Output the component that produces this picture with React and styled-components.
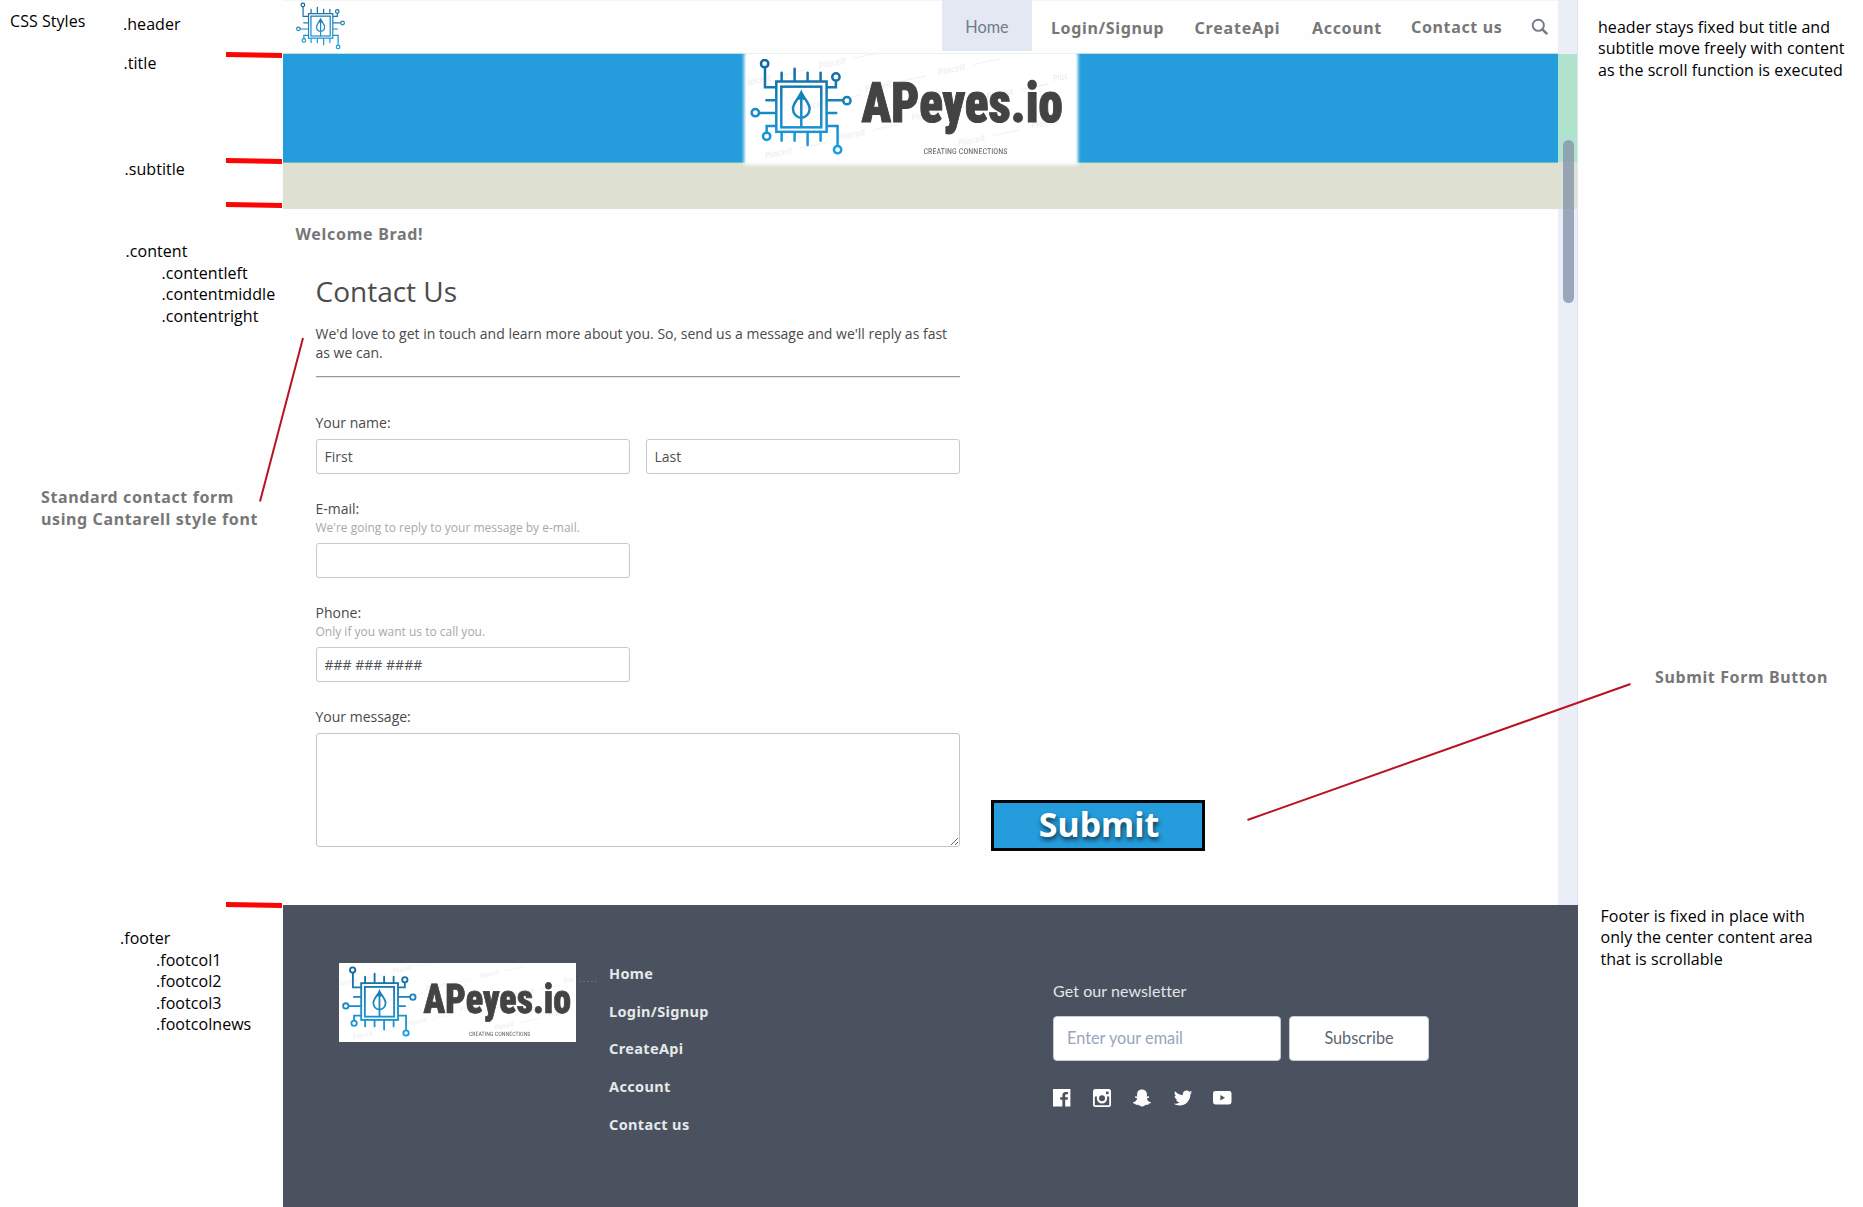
import React from "react";
import styled, { createGlobalStyle } from "styled-components";
import { IoLogoTwitter } from "react-icons/io";
import { FaSnapchatGhost } from "react-icons/fa";

const body = '"Open Sans", "Noto Sans", sans-serif';
const display = '"Noto Sans", "Open Sans", sans-serif';
const lato = 'Lato, "Open Sans", sans-serif';

const GlobalStyle = createGlobalStyle`
  * { box-sizing: border-box; }
  body { margin: 0; background: #fefefe; font-family: ${body}; }
`;

const Board = styled.div`
  position: relative;
  display: grid;
  grid-template-columns: 283px 1295px 285px;
  width: 1863px;
  height: 1207px;
  overflow: hidden;
`;

/* ---------- annotation gutters ---------- */
const Gutter = styled.aside`
  display: flex;
  flex-direction: column;
  color: #000;
  font-size: 16px;
  line-height: 21.6px;
  letter-spacing: 0.05px;
  white-space: nowrap;
`;
const GutterTop = styled.div`
  display: flex;
  height: 486px;
`;
const GutterHeading = styled.div`
  width: 123px;
  padding: 10.5px 0 0 10px;
  flex: none;
`;
const Notes = styled.div`
  display: flex;
  flex-direction: column;
  padding: ${(p) => p.$pad || "0"};
`;
const Note = styled.div`
  margin-top: ${(p) => p.$gap || 0}px;
  padding-left: ${(p) => p.$indent || 0}px;
`;
const Callout = styled.div`
  font: 700 16px/22px ${display};
  letter-spacing: 0.62px;
  color: #777;
  padding: ${(p) => p.$pad};
  height: ${(p) => p.$height}px;
`;
const Marks = styled.svg`
  position: absolute;
  inset: 0;
  pointer-events: none;
`;

/* ---------- page ---------- */
const Page = styled.main`
  display: flex;
  flex-direction: column;
  height: 1207px;
`;
const Scroller = styled.div`
  display: grid;
  grid-template-columns: 1275px 20px;
  height: 905px;
`;
const Main = styled.div`
  display: flex;
  flex-direction: column;
`;
const Header = styled.header`
  display: flex;
  height: 54px;
  border-top: 1px solid #f5f5f5;
  border-bottom: 1px solid #b9e4da;
  background: #fefefe;
`;
const HeaderLogo = styled.div`
  width: 659px;
  padding: 1px 0 0 12.5px;
`;
const NavTab = styled.a`
  width: 90px;
  height: 51px;
  margin-top: -1px;
  background: #e4e8f2;
  color: #727b89;
  font: 400 16.3px/54px ${lato};
  text-align: center;
`;
const NavLink = styled.a`
  width: ${(p) => p.$width}px;
  color: #777;
  font: 700 16px/22px ${display};
  letter-spacing: ${(p) => p.$track || 0.65}px;
  padding-top: ${(p) => p.$top || 16}px;
`;
const Nav = styled.nav`
  display: flex;
`;
const NavLinks = styled.div`
  display: flex;
  padding-left: 19px;
`;
const SearchIcon = styled.svg`
  margin-top: 17px;
`;
const Title = styled.section`
  position: relative;
  z-index: 1;
  height: 109px;
  background: #259ddd;
  border-bottom: 1px solid #62bfc6;
`;
const Banner = styled.div`
  width: 330px;
  height: 108px;
  margin-left: 463px;
  background: #fff;
  box-shadow: 0 1px 3px 2px #fdfefc;
`;
const Subtitle = styled.section`
  height: 46px;
  background: #dee1d1;
`;
const Welcome = styled.div`
  height: 63px;
  padding: 14px 0 0 12.5px;
  color: #777;
  font: 700 16px/22px ${display};
  letter-spacing: 0.7px;
`;
const Content = styled.section`
  display: flex;
  align-items: flex-end;
  padding-left: 33px;
  height: 575px;
`;
const Form = styled.form`
  width: 644px;
  color: #4a4a4a;
  font-size: 14px;
  line-height: 19px;
  display: flex;
  flex-direction: column;
`;
const FormTitle = styled.h1`
  margin: 0 0 0 -0.5px;
  font-size: 28px;
  line-height: 40px;
  font-weight: 400;
  color: #4c4c4c;
`;
const Intro = styled.p`
  margin: 13px 0 0 -0.5px;
`;
const Rule = styled.hr`
  width: 100%;
  height: 2px;
  margin: 14px 0 35px;
  border: 0;
  border-top: 1px solid #999;
  border-bottom: 1px solid #e4e4e4;
`;
const Field = styled.label`
  display: flex;
  flex-direction: column;
  margin-bottom: ${(p) => p.$after || 0}px;
`;
const FieldName = styled.span`
  margin-left: -0.5px;
`;
const Hint = styled.span`
  height: 18px;
  margin-left: -0.5px;
  font-size: 12px;
  line-height: 20px;
  color: #a9a9a9;
`;
const Inputs = styled.div`
  display: flex;
  gap: 16px;
  margin-top: 7px;
`;
const Input = styled.input`
  width: 314px;
  height: 35px;
  padding: 0 7.5px;
  border: 1px solid #c9c9c9;
  border-radius: 3px;
  background: #fff;
  font: 14px ${body};
  color: #555;
  outline: none;
  &::placeholder { color: #4f4f4f; opacity: 1; }
`;
const TextArea = styled.textarea`
  width: 644px;
  height: 114px;
  margin: 7px 0 0;
  border: 1px solid #c4c4c4;
  border-radius: 3px;
  background: #fff;
  display: block;
`;
const Submit = styled.button`
  width: 214px;
  height: 51px;
  margin: 0 0 -4px 31px;
  padding: 0 0 3px 2px;
  border: 3px solid #050505;
  background: #259ddd;
  color: #fff;
  font: 700 34px/40px ${display};
  text-shadow: 1px 3px 5px rgba(0, 0, 0, 0.65);
`;
const Track = styled.div`
  display: flex;
  flex-direction: column;
  position: relative;
  background: #ebeef7;
  border-right: 1px solid #e0e4f0;
`;
const TrackZone = styled.div`
  height: ${(p) => p.$height}px;
  background: ${(p) => p.$color};
`;
const Thumb = styled.div`
  position: absolute;
  left: 5px;
  top: 140px;
  width: 11px;
  height: 163px;
  border-radius: 6px;
  background: rgba(134, 149, 170, 0.8);
`;

/* ---------- footer ---------- */
const Footer = styled.footer`
  display: flex;
  height: 302px;
  background: #49525e;
`;
const FootLogo = styled.div`
  width: 237px;
  height: 79px;
  margin: 58px 0 0 56px;
  background: #fff;
`;
const Dashes = styled.div`
  width: 20px;
  height: 1px;
  margin: 76px 10px 0 3px;
  background: repeating-linear-gradient(90deg, #656d77 0 2px, transparent 2px 4px);
`;
const FootLinks = styled.div`
  display: flex;
  flex-direction: column;
  width: 444px;
  padding-top: 50px;
`;
const FootLink = styled.a`
  color: #e6e8ea;
  font: 700 14.5px/37.7px ${display};
  letter-spacing: 0.35px;
`;
const Newsletter = styled.div`
  padding-top: 76px;
  font: 16px/20px ${lato};
  letter-spacing: 0.08px;
  color: #e3e5e8;
`;
const NewsRow = styled.div`
  display: flex;
  gap: 8px;
  margin-top: 15px;
`;
const NewsInput = styled.input`
  width: 228px;
  height: 45px;
  padding: 0 13px 2px;
  border: 1px solid #c9cdd3;
  border-radius: 4px;
  font: 16.3px ${lato};
  background: #fff;
  outline: none;
  &::placeholder { color: #98a5bc; opacity: 1; }
`;
const NewsButton = styled.button`
  width: 140px;
  height: 45px;
  padding: 0 0 2px;
  border: 1px solid #c9cdd3;
  border-radius: 4px;
  font: 16.3px ${lato};
  background: #fff;
  color: #5c6673;
`;
const Socials = styled.div`
  display: flex;
  align-items: center;
  gap: 22px;
  height: 20px;
  margin-top: 27px;
  color: #fff;
  & > :last-child { margin-left: -2px; }
`;

function ChipArt({ id }) {
  return (
    <g fill="none" stroke={`url(#${id})`} strokeWidth="7.5" strokeLinecap="round">
      <defs>
        <linearGradient id={id} gradientUnits="userSpaceOnUse" x1="0" y1="60" x2="0" y2="340">
          <stop offset="0" stopColor="#10659a" />
          <stop offset="0.5" stopColor="#1a86c0" />
          <stop offset="1" stopColor="#1b9ee2" />
        </linearGradient>
      </defs>
      <rect x="168" y="126.5" width="151" height="151" />
      <rect x="183" y="142" width="120" height="122" />
      <path d="M243 160C233 180 218 192 218 208C218 224 230 234 243 236C256 234 268 224 268 208C268 192 253 180 243 160ZM243 160V262M236 178L243 160L250 178" />
      <path d="M184 100V124M223 88V124M262 100V124M301 100V124M184 281V304M223 281V304M262 281V317M301 281V304" />
      <path d="M134 86V144H164M347 125V144H323M138 183H164M118 221H164M139 279V260H164M323 183H367M323 221H348M323 260H352V318" />
      <circle cx="133" cy="73" r="11" />
      <circle cx="347" cy="113" r="11" />
      <circle cx="105" cy="220" r="11" />
      <circle cx="139" cy="291" r="11" />
      <circle cx="380" cy="184" r="11" />
      <circle cx="352" cy="331" r="11" />
    </g>
  );
}

/* x, y, text, width, whether a dash trails the word */
const stamps = [
  [297, 88, "Placeit", 84, true],
  [655, 107, "Placeit", 84, true],
  [1000, 128, "Plac", 46, false],
  [82, 138, "laceit", 74, true],
  [435, 158, "Placeit", 84, true],
  [240, 215, "Placeit", 84, true],
  [800, 182, "Placeit", 84, true],
  [575, 244, "Placeit", 84, true],
  [355, 303, "Placeit", 84, true],
  [935, 268, "Placeit", 84, false],
  [715, 320, "Placeit", 84, true],
  [135, 358, "Placeit", 84, true],
];

function Logo({ id, span = 991 }) {
  return (
    <svg width="100%" height="100%" viewBox={`77 44 ${span} 324`} preserveAspectRatio="none" display="block" textRendering="geometricPrecision">
      <g fill="#000" opacity="0.08" fontFamily="Open Sans, sans-serif" fontStyle="italic" fontWeight="600" fontSize="27">
        {stamps.map(([x, y, word, width, dash]) => (
          <g key={`${x}-${y}`} transform={`translate(${x} ${y}) rotate(-12)`}>
            <text textLength={width} lengthAdjust="spacingAndGlyphs">{word}</text>
            {dash && <rect x="108" y="-10" width="82" height="2.5" />}
          </g>
        ))}
      </g>
      <ChipArt id={id} />
      <text
        x="424" y="249" fontSize="168" fill="#434343" stroke="#434343" strokeWidth="3"
        textLength="604" lengthAdjust="spacingAndGlyphs"
        style={{ fontFamily: "Roboto, sans-serif", fontWeight: 900, fontStretch: "75%" }}
      >
        APeyes.io
      </text>
      <text
        x="610" y="345" fontSize="24" fill="#5c5c5c" textLength="252" lengthAdjust="spacing"
        style={{ fontFamily: "Roboto, sans-serif", fontWeight: 400, fontStretch: "75%" }}
      >
        CREATING CONNECTIONS
      </text>
    </svg>
  );
}

const footLinks = ["Home", "Login/Signup", "CreateApi", "Account", "Contact us"];

export default function App() {
  return (
    <Board>
      <GlobalStyle />
      <Gutter>
        <GutterTop>
          <GutterHeading>CSS Styles</GutterHeading>
          <Notes>
            <Note $gap={14.4}>.header</Note>
            <Note $gap={17.4} $indent={0.5}>.title</Note>
            <Note $gap={84.4} $indent={1.5}>.subtitle</Note>
            <Note $gap={60} $indent={2.5}>.content</Note>
            <Note $indent={38.5}>.contentleft</Note>
            <Note $indent={38.5}>.contentmiddle</Note>
            <Note $indent={38.5}>.contentright</Note>
          </Notes>
        </GutterTop>
        <Callout $pad="0 0 0 41px" $height={442}>
          Standard contact form
          <br />
          using Cantarell style font
        </Callout>
        <Notes $pad="0 0 0 120px">
          <Note>.footer</Note>
          <Note $indent={36}>.footcol1</Note>
          <Note $indent={36}>.footcol2</Note>
          <Note $indent={36}>.footcol3</Note>
          <Note $indent={36}>.footcolnews</Note>
        </Notes>
      </Gutter>

      <Page>
        <Scroller>
          <Main>
            <Header>
              <HeaderLogo>
                <svg width="49" height="48" viewBox="90 55 305 295" preserveAspectRatio="none">
                  <ChipArt id="chip-head" />
                </svg>
              </HeaderLogo>
              <Nav>
                <NavTab>Home</NavTab>
                <NavLinks>
                  <NavLink $width={143.5}>Login/Signup</NavLink>
                  <NavLink $width={117.5} $track={0.8}>CreateApi</NavLink>
                  <NavLink $width={99}>Account</NavLink>
                  <NavLink $width={119.5} $top={15}>Contact us</NavLink>
                  <SearchIcon width="18" height="18" viewBox="0 0 18 18" fill="none" stroke="#727b89" strokeWidth="1.9">
                    <circle cx="7.3" cy="7.3" r="5.6" />
                    <path d="M11.4 11.4L16.2 16.2" strokeWidth="2.6" />
                  </SearchIcon>
                </NavLinks>
              </Nav>
            </Header>
            <Title>
              <Banner>
                <Logo id="chip-banner" />
              </Banner>
            </Title>
            <Subtitle />
            <Welcome>Welcome Brad!</Welcome>
            <Content>
              <Form>
                <FormTitle>Contact Us</FormTitle>
                <Intro>
                  We'd love to get in touch and learn more about you. So, send us a message and we'll reply as fast
                  as we can.
                </Intro>
                <Rule />
                <Field as="div" $after={25}>
                  <FieldName>Your name:</FieldName>
                  <Inputs>
                    <Input placeholder="First" />
                    <Input placeholder="Last" />
                  </Inputs>
                </Field>
                <Field $after={25}>
                  <FieldName>E-mail:</FieldName>
                  <Hint>We're going to reply to your message by e-mail.</Hint>
                  <Inputs><Input /></Inputs>
                </Field>
                <Field $after={25}>
                  <FieldName>Phone:</FieldName>
                  <Hint>Only if you want us to call you.</Hint>
                  <Inputs><Input placeholder="### ### ####" /></Inputs>
                </Field>
                <Field>
                  <FieldName>Your message:</FieldName>
                  <TextArea />
                </Field>
              </Form>
              <Submit type="button">Submit</Submit>
            </Content>
          </Main>
          <Track>
            <TrackZone $height={54} />
            <TrackZone $height={108} $color="#afe3cd" />
            <TrackZone $height={47} $color="#dee1d8" />
            <Thumb />
          </Track>
        </Scroller>
        <Footer>
          <FootLogo>
            <Logo id="chip-foot" span={972} />
          </FootLogo>
          <Dashes />
          <FootLinks>
            {footLinks.map((t) => (
              <FootLink key={t}>{t}</FootLink>
            ))}
          </FootLinks>
          <Newsletter>
            Get our newsletter
            <NewsRow>
              <NewsInput placeholder="Enter your email" />
              <NewsButton type="button">Subscribe</NewsButton>
            </NewsRow>
            <Socials>
              <svg width="18" height="18" viewBox="0 0 18 18">
                <path fill="#fff" d="M0 0H17.4V17.6H12.2V10.8H14.6L15 8.2H12.2V6.6C12.2 5.7 12.6 5.3 13.6 5.3H15V2.9H12.9C10.6 2.9 9.4 4.2 9.4 6.2V8.2H7.2V10.8H9.4V17.6H0Z" />
              </svg>
              <svg width="18" height="18" viewBox="0 0 18 18">
                <rect x="0.9" y="0.9" width="16.2" height="16.2" rx="1.4" fill="none" stroke="#fff" strokeWidth="1.8" />
                <path fill="#fff" d="M1 1H17V7.4H13A4.6 4.6 0 0 0 5 7.4H1Z" />
                <circle cx="9" cy="9.2" r="4.1" fill="#49525e" stroke="#fff" strokeWidth="2.2" />
                <rect x="13" y="2.6" width="2.6" height="2.6" fill="#49525e" />
              </svg>
              <FaSnapchatGhost size={18} />
              <IoLogoTwitter size={20} />
              <svg width="19" height="14" viewBox="0 0 19 14">
                <rect width="18.5" height="13.4" rx="2.4" fill="#fff" />
                <path d="M7.4 4L12 6.7L7.4 9.4Z" fill="#49525e" />
              </svg>
            </Socials>
          </Newsletter>
        </Footer>
      </Page>

      <Gutter>
        <Notes $pad="16.8px 0 0 20px">
          <Note>header stays fixed but title and</Note>
          <Note>subtitle move freely with content</Note>
          <Note>as the scroll function is executed</Note>
        </Notes>
        <Callout $pad="584.5px 0 0 77px" $height={824.2}>Submit Form Button</Callout>
        <Notes $pad="0 0 0 22.5px">
          <Note>Footer is fixed in place with</Note>
          <Note>only the center content area</Note>
          <Note>that is scrollable</Note>
        </Notes>
      </Gutter>

      <Marks width="1863" height="1207">
        <g fill="#fc0505">
          {[52, 158, 202, 902].map((y) => (
            <path key={y} d={`M226 ${y}L282 ${y + 1}V${y + 6}L226 ${y + 5}Z`} />
          ))}
        </g>
        <g stroke="#b81225" strokeWidth="2">
          <path d="M260 501.5L303 338" />
          <path d="M1247.5 820L1630.5 684" />
        </g>
      </Marks>
    </Board>
  );
}
